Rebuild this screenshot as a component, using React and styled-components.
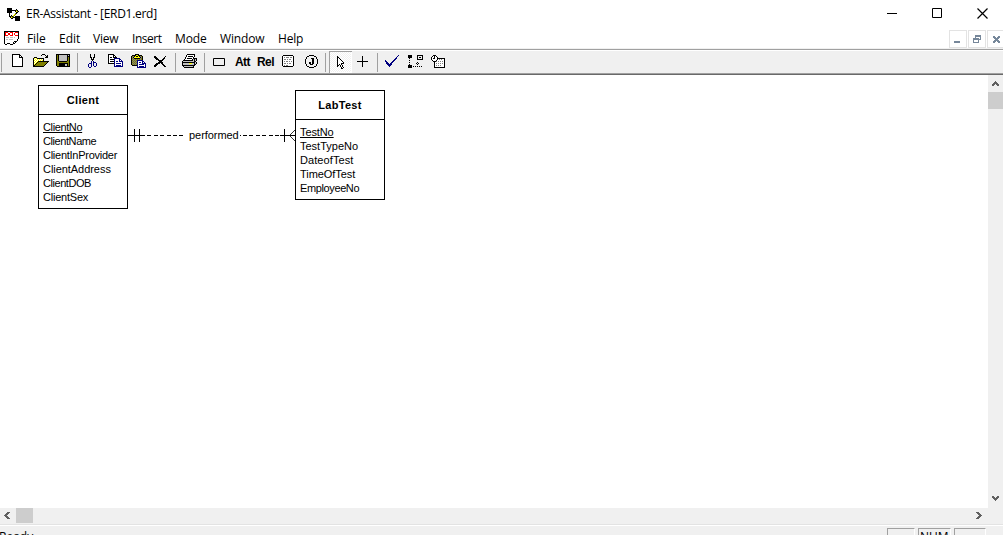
import React from "react";
import styled, { createGlobalStyle } from "styled-components";

const Global = createGlobalStyle`
  * { box-sizing: border-box; }
  body { margin: 0; background: #fff; overflow: hidden; }
`;

const uiFont = `"Open Sans", "Noto Sans", sans-serif`;
const docFont = `"Liberation Sans", Arial, sans-serif`;

const Window = styled.div`
  display: flex;
  flex-direction: column;
  width: 1003px;
  height: 535px;
  overflow: hidden;
  background: #fff;
  color: #000;
  > * { flex: none; }
`;

const TitleBar = styled.header`
  display: flex;
  align-items: center;
  height: 27px;
  padding-left: 6px;
`;

const Title = styled.h1`
  flex: 1;
  margin: 0 0 0 4px;
  font: 400 12px/18px ${uiFont};
  letter-spacing: -0.29px;
`;

const CaptionButton = styled.button`
  display: grid;
  place-items: center;
  width: ${(p) => p.$w || 45}px;
  height: 27px;
  padding: 0;
  border: 0;
  background: none;
`;

const MenuBar = styled.nav`
  display: flex;
  align-items: center;
  height: 22px;
  padding-left: 4px;
  border-bottom: 1px solid #f0f0f0;
`;

const Menus = styled.div`
  display: flex;
  flex: 1;
  margin-left: 7px;
  padding-top: 2px;
`;

const MenuItem = styled.span`
  width: ${(p) => p.$w}px;
  font: 400 12px/20px ${uiFont};
  letter-spacing: ${(p) => p.$track || 0}px;
  white-space: nowrap;
`;

const ChildButton = styled.button`
  display: grid;
  place-items: center;
  flex: none;
  width: 18px;
  height: 18px;
  margin: 3px 1px 0 0;
  padding: 0;
  border: 1px solid #e3e3e3;
  background: #fff;
  &:last-child { margin-right: -2px; }
`;

const Toolbar = styled.div`
  display: flex;
  height: 26px;
  padding-left: 2px;
  background: #f0f0f0;
  border-top: 1px solid #a0a0a0;
  border-bottom: 1px solid #696969;
  box-shadow: inset 0 1px #fff, inset 0 -1px #a0a0a0;
`;

const Divider = styled.i`
  width: 1px;
  height: 19px;
  margin: 3px ${(p) => p.$r}px 0 ${(p) => p.$l}px;
  background: #a0a0a0;
`;

const ToolButton = styled.button`
  width: 23px;
  height: 22px;
  flex: none;
  margin-top: 1px;
  padding: 0;
  border: 0;
  background: none;
  font: 700 12px/22px ${docFont};
  letter-spacing: -0.5px;
  text-align: center;
  svg { display: block; }
`;

const PressedButton = styled(ToolButton)`
  background: repeating-conic-gradient(#fff 0 25%, #f0f0f0 0 50%) 0 0 / 2px 2px;
  box-shadow: inset 1px 1px #a0a0a0, inset -1px -1px #fff;
`;

const Workspace = styled.main`
  display: grid;
  grid-template: 433px 16px / 988px 15px;
`;

const Canvas = styled.div`
  position: relative;
  overflow: hidden;
  background: #fff;
`;

const Entity = styled.section`
  position: absolute;
  left: ${(p) => p.$x}px;
  top: ${(p) => p.$y}px;
  width: 90px;
  padding-bottom: 4px;
  border: 1px solid #000;
  font: 11px/14px ${docFont};
`;

const EntityName = styled.h2`
  height: 29px;
  margin: 0 0 5px;
  border-bottom: 1px solid #000;
  font: 700 11px/28px ${docFont};
  letter-spacing: 0.3px;
  text-align: center;
`;

const Attribute = styled.div`
  height: 14px;
  padding-left: 4px;
  white-space: nowrap;
  letter-spacing: ${(p) => p.$track}px;
  text-decoration: ${(p) => (p.$key ? "underline" : "none")};
`;

const Link = styled.svg`
  position: absolute;
  left: 128px;
  top: 50px;
`;

const LinkLabel = styled.span`
  position: absolute;
  left: 189px;
  top: 53px;
  font: 11px/14px ${docFont};
  letter-spacing: -0.05px;
`;

const VScroll = styled.div`
  display: flex;
  flex-direction: column;
  background: #f0f0f0;
  svg { display: block; }
`;

const HScroll = styled.div`
  display: flex;
  background: #f0f0f0;
  svg { display: block; }
`;

const Thumb = styled.div`
  width: ${(p) => p.$w}px;
  height: ${(p) => p.$h}px;
  background: #cdcdcd;
`;

const Space = styled.div`
  flex: 1;
`;

const StatusBar = styled.footer`
  display: flex;
  height: 22px;
  padding-right: 17px;
  border-top: 1px solid #e3e3e3;
  box-shadow: inset 0 1px #fff;
  background: #f0f0f0;
  font: 12px/16px ${uiFont};
`;

const StatusText = styled.span`
  flex: 1;
  margin: 4px 0 0 -1px;
`;

const StatusPane = styled.span`
  width: ${(p) => p.$w}px;
  height: 18px;
  margin: 3px 0 0 3px;
  padding-left: 1px;
  border: 1px solid #a0a0a0;
  border-right-color: #fff;
  line-height: 15px;
`;

const palette = {
  "#": "#000", w: "#fff", y: "#ffff00", d: "#808000", n: "#000080",
  g: "#808080", l: "#c0c0c0", r: "#ff0000", c: "#606060", s: "#76879a",
};

/* Draws a small bitmap glyph: one character of a row is one pixel. */
function Pixels({ rows, w, h, x = 0, y = 0 }) {
  const runs = [];
  rows.forEach((row, j) => {
    let i = 0;
    while (i < row.length) {
      let k = i + 1;
      while (k < row.length && row[k] === row[i]) k++;
      if (palette[row[i]])
        runs.push(<rect key={`${i}-${j}`} x={x + i} y={y + j} width={k - i} height="1" fill={palette[row[i]]} />);
      i = k;
    }
  });
  return (
    <svg width={w} height={h} shapeRendering="crispEdges" aria-hidden="true">
      {runs}
    </svg>
  );
}

const glyphs = {
  app: [
    "#####.........",
    "#####....#....",
    "#########d#...",
    "#####...#yd#..",
    "#####....##...",
    "..#.....d#....",
    "..#....yd.....",
    "..#.#.yd......",
    "..##d#d.#####.",
    "...#yd#######.",
    "....##..#####.",
    "........#####.",
    "........#####.",
  ],
  doc: [
    "###############",
    "#rrrwwrrrwwrrr#",
    "#rwwrrwwrwrwww#",
    "#rwwrrwwrwrwww#",
    "#rrrwwrrrwwrrr#",
    "#wwwwwwwwwwwww#",
    "#wlllwlllwlwww#",
    "#wwwwwwwwwwwww#",
    "#wllwllllwwww#.",
    "#wwwwwwwwwwww#.",
    "#wwwwwwwww###..",
    "#wwwwwwww#w#...",
    "#ww###www##....",
    ".##...###......",
  ],
  new: [
    "########...", "#wwwwww##..", "#wwwwww#w#.", "#wwwwww####",
    "#wwwwwwwww#", "#wwwwwwwww#", "#wwwwwwwww#", "#wwwwwwwww#", "#wwwwwwwww#",
    "#wwwwwwwww#", "#wwwwwwwww#", "#wwwwwwwww#", "###########",
  ],
  open: [
    ".........###....",
    "........#...#.#.",
    ".............##.",
    ".###........###.",
    "#ywy#######.....",
    "#wywywywyw#.....",
    "#ywywywywy#.....",
    "#wywy###########",
    "#ywy#ddddddddd#.",
    "#wy#ddddddddd#..",
    "#y#ddddddddd#...",
    "##ddddddddd#....",
    "###########.....",
  ],
  save: [
    "##############",
    "#d#llllllll#l#",
    "#d#llllllll###",
    "#d#llllllll#d#",
    "#d#llllllll#d#",
    "#d#llllllll#d#",
    "#d#llllllll#d#",
    "#dd########dd#",
    "#dddddddddddd#",
    "#dd#########d#",
    "#dd######ll#d#",
    "#dd######ll#d#",
    ".#############",
  ],
  cut: [
    "..#...#..", "..#...#..", "..#...#..", "..##.##..", "...#.#...",
    "...###...", "....#....", "...n.n...", "...n.nnn.", ".nnn.n..n",
    "n..n.n..n", "n..n.n..n", "n..n..nn.", ".nn......",
  ],
  copy: [
    "######.........",
    "#wwww##........",
    "#wwww#w#.......",
    "#w##w####......",
    "#wwwwwnnnnnn...",
    "#w####nwwwwnn..",
    "#wwwwwnwwwwnwn.",
    "#w####nwnnwnnnn",
    "#wwwwwnwwwwwwwn",
    "######nwnnnnnwn",
    "......nwwwwwwwn",
    "......nwnnnnnwn",
    "......nnnnnnnnn",
  ],
  paste: [
    "....####.......",
    ".####yy####....",
    "#dg#y##y#gd#...",
    "#g#yyyyyy#g#...",
    "#dg######gd#...",
    "#gdgdgdgdgd#...",
    "#dgdgdnnnnnn...",
    "#gdgdgnwwwwnn..",
    "#dgdgdnwnnwnwn.",
    "#gdgdgnwwwwnnnn",
    "#dgdgdnwnnnnnwn",
    ".#####nwwwwwwwn",
    "......nwnnnnnwn",
    "......nnnnnnnnn",
  ],
  remove: [
    "##.........#",
    "###.......#.",
    ".###.....##.",
    "..###...##..",
    "....#####...",
    ".....###....",
    "....#####...",
    "..####.##...",
    ".###....##..",
    "###......##.",
    "##........##",
  ],
  print: [
    ".....########..",
    "....#wwwwwww#..",
    "....#w#####w#..",
    "...#wwwwwww#...",
    "...#w#####w####",
    "..#wwwwwww#l#l#",
    ".##########l#l#",
    "#lllllllllll##.",
    "#############l#",
    "#llllllyyyll#l#",
    "#lllllllllll##.",
    "#############..",
    ".#lllllllll#...",
    "..##########...",
  ],
  grid: [
    ".##########.", "#wwwwwwwwww#", "#wgwgggwggw#", "#wwwwwwwwww#", "#wggwgwggww#", "#wwwwwwwwww#",
    "#wgwggwgwgw#", "#wwwwwwwwww#", "#wggwgwggww#", "#wwwwwwwwww#", "#wgwggwwwww#", ".##########.",
  ],
  join: [
    "....#####....",
    "..##.....##..",
    ".#.........#.",
    ".#....###..#.",
    "#......##...#",
    "#......##...#",
    "#......##...#",
    "#...##.##...#",
    "#...##.##...#",
    ".#...###...#.",
    ".#.........#.",
    "..##.....##..",
    "....#####....",
  ],
  pointer: [
    "#......", "##.....", "#w#....", "#ww#...", "#www#..", "#wwww#.", "#wwwww#",
    "#www###", "#w#w#..", "##.#w#.", "#..#w#.", "....#w#", "....##.",
  ],
  check: [
    ".............n",
    "............n.",
    "...........n..",
    "..........nn..",
    ".........nn...",
    "n.......nn....",
    "nn.....nn.....",
    ".nn...nn......",
    ".nnn.nn.......",
    "..nnnnn.......",
    "...nnn........",
    "....n.........",
  ],
  arrange: [
    "####.....######",
    "####.....#....#",
    "####.....#.##.#",
    ".#.......#....#",
    ".........######",
    ".#.............",
    "...............",
    ".#.......#.....",
    "........#.#....",
    ".#.......#.....",
    "####...........",
    "####.#.#.#.#.#.",
    "####...........",
  ],
  history: [
    "..###..........",
    ".#w#w#.........",
    "#ww#ww#........",
    "#w##ww########.",
    "#wwwww#wgwgww#.",
    ".#www#wwwwwww#.",
    "..###gwgwgwgw#.",
    "...#wwwwwwwww#.",
    "...#wgwgwgwgw#.",
    "...#wwwwwwwww#.",
    "...#wgwgwgwww#.",
    "...#wwwwwwwww#.",
    "...###########.",
  ],
  restore: [
    "..ssssss", "..ssssss", "..s....s", "ssssss.s", "ssssssss", "s....s..", "s....s..", "ssssss..",
  ],
  closeChild: ["ss...ss", "sss.sss", ".sssss.", "..sss..", ".sssss.", "sss.sss", "ss...ss"],
  up: ["...c...", "..ccc..", ".ccccc.", "ccc.ccc", "cc...cc"],
  left: ["...ccc", "..ccc.", ".ccc..", "ccc...", ".ccc..", "..ccc.", "...ccc"],
};
glyphs.down = [...glyphs.up].reverse();
glyphs.right = glyphs.left.map((r) => [...r].reverse().join(""));

function Tool({ name, x, y }) {
  return (
    <ToolButton aria-label={name}>
      <Pixels rows={glyphs[name]} w={23} h={22} x={x} y={y} />
    </ToolButton>
  );
}

const clientFields = [["ClientNo", -0.38], ["ClientName", -0.42], ["ClientInProvider", -0.26], ["ClientAddress", -0.05], ["ClientDOB", -0.45], ["ClientSex", -0.22]];
const testFields = [["TestNo", -0.1], ["TestTypeNo", 0], ["DateofTest", 0.08], ["TimeOfTest", -0.05], ["EmployeeNo", -0.38]];

function EntityBox({ name, x, y, fields }) {
  return (
    <Entity $x={x} $y={y}>
      <EntityName>{name}</EntityName>
      {fields.map(([f, track], i) => (
        <Attribute key={f} $track={track} $key={i === 0}>{f}</Attribute>
      ))}
    </Entity>
  );
}

export default function App() {
  return (
    <Window>
      <Global />
      <TitleBar>
        <Pixels rows={glyphs.app} w={16} h={16} x={1} y={2} />
        <Title>ER-Assistant - [ERD1.erd]</Title>
        <CaptionButton aria-label="Minimize">
          <svg width="11" height="11"><path d="M0 5.5H10" stroke="#000" /></svg>
        </CaptionButton>
        <CaptionButton aria-label="Maximize">
          <svg width="11" height="11"><path d="M.5.5h9v9h-9z" fill="none" stroke="#000" /></svg>
        </CaptionButton>
        <CaptionButton $w={43} aria-label="Close">
          <svg width="13" height="11"><path d="M2.5.5l10 10M12.5.5l-10 10" stroke="#000" strokeWidth="1.2" /></svg>
        </CaptionButton>
      </TitleBar>
      <MenuBar>
        <Pixels rows={glyphs.doc} w={16} h={18} y={2} />
        <Menus>
          <MenuItem $w={32} $track={-0.1}>File</MenuItem>
          <MenuItem $w={34}>Edit</MenuItem>
          <MenuItem $w={39} $track={-0.2}>View</MenuItem>
          <MenuItem $w={43} $track={-0.45}>Insert</MenuItem>
          <MenuItem $w={45} $track={-0.1}>Mode</MenuItem>
          <MenuItem $w={58} $track={-0.15}>Window</MenuItem>
          <MenuItem $w={40} $track={-0.2}>Help</MenuItem>
        </Menus>
        <ChildButton aria-label="Minimize document">
          <svg width="16" height="16"><path d="M4 10h6v2h-6z" fill="#76879a" /></svg>
        </ChildButton>
        <ChildButton aria-label="Restore document"><Pixels rows={glyphs.restore} w={8} h={8} /></ChildButton>
        <ChildButton aria-label="Close document"><Pixels rows={glyphs.closeChild} w={7} h={7} /></ChildButton>
      </MenuBar>
      <Toolbar>
        <Divider $l={-1} $r={4} />
        <Tool name="new" x={6} y={3} />
        <Tool name="open" x={4} y={3} />
        <Tool name="save" x={4} y={3} />
        <Divider $l={2} $r={3} />
        <Tool name="cut" x={7} y={3} />
        <Tool name="copy" x={4} y={3} />
        <Tool name="paste" x={4} y={3} />
        <Tool name="remove" x={4} y={5} />
        <Divider $l={2} $r={3} />
        <Tool name="print" x={3} y={3} />
        <Divider $l={2} $r={3} />
        <ToolButton aria-label="entity">
          <svg width="23" height="22"><path d="M5.5 7.5h11v7h-11z" fill="none" stroke="#000" /></svg>
        </ToolButton>
        <ToolButton>Att</ToolButton>
        <ToolButton>Rel</ToolButton>
        <Tool name="grid" x={5} y={4} />
        <Tool name="join" x={5} y={4} />
        <Divider $l={2} $r={3} />
        <PressedButton aria-label="pointer"><Pixels rows={glyphs.pointer} w={23} h={22} x={8} y={5} /></PressedButton>
        <ToolButton aria-label="cross">
          <svg width="23" height="22"><path d="M5 10.5h11M10.5 5v11" stroke="#000" /></svg>
        </ToolButton>
        <Divider $l={2} $r={3} />
        <Tool name="check" x={4} y={4} />
        <Tool name="arrange" x={4} y={4} />
        <Tool name="history" x={4} y={4} />
      </Toolbar>
      <Workspace>
        <Canvas>
          <EntityBox name="Client" x={38} y={10} fields={clientFields} />
          <EntityBox name="LabTest" x={295} y={15} fields={testFields} />
          <Link width="168" height="20" fill="none" stroke="#000" shapeRendering="crispEdges">
            <path d="M0 10.5H13M6.5 4v13M11.5 4v13" />
            <path d="M13 10.5H58M115 10.5H152" strokeDasharray="4 2.4" />
            <path d="M112 10.5h1M152 10.5h15M156.5 4v13" />
            <path d="M167 5l-5.5 5.5l5.5 5.5" strokeWidth="0.8" shapeRendering="auto" />
          </Link>
          <LinkLabel>performed</LinkLabel>
        </Canvas>
        <VScroll>
          <Pixels rows={glyphs.up} w={15} h={17} x={4} y={6} />
          <Thumb $w={15} $h={17} />
          <Space />
          <Pixels rows={glyphs.down} w={15} h={17} x={4} y={5} />
        </VScroll>
        <HScroll>
          <Pixels rows={glyphs.left} w={16} h={16} x={4} y={4} />
          <Thumb $w={17} $h={15} />
          <Space />
          <Pixels rows={glyphs.right} w={16} h={16} x={4} y={4} />
        </HScroll>
        <VScroll />
      </Workspace>
      <StatusBar>
        <StatusText>Ready</StatusText>
        <StatusPane $w={28} />
        <StatusPane $w={33}>NUM</StatusPane>
        <StatusPane $w={32} />
      </StatusBar>
    </Window>
  );
}
